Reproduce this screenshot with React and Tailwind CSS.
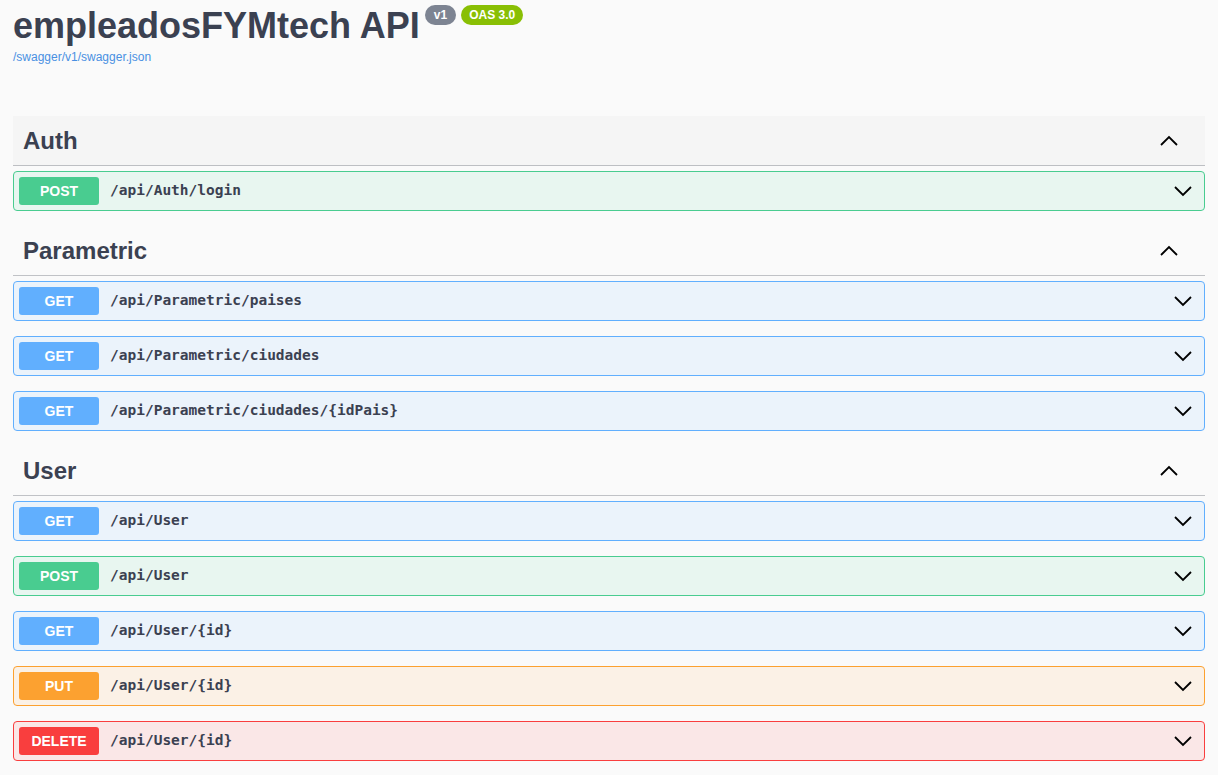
import React from 'react';

const methodStyles = {
  GET: { wrap: 'border-[#61affe] bg-[#ebf3fb]', badge: 'bg-[#61affe]' },
  POST: { wrap: 'border-[#49cc90] bg-[#e8f6f0]', badge: 'bg-[#49cc90]' },
  PUT: { wrap: 'border-[#fca130] bg-[#fbf1e6]', badge: 'bg-[#fca130]' },
  DELETE: { wrap: 'border-[#f93e3e] bg-[#fae7e7]', badge: 'bg-[#f93e3e]' },
};

const tags = [
  { name: 'Auth', hover: true, ops: [{ method: 'POST', path: '/api/Auth/login' }] },
  {
    name: 'Parametric',
    ops: [
      { method: 'GET', path: '/api/Parametric/paises' },
      { method: 'GET', path: '/api/Parametric/ciudades' },
      { method: 'GET', path: '/api/Parametric/ciudades/{idPais}' },
    ],
  },
  {
    name: 'User',
    ops: [
      { method: 'GET', path: '/api/User' },
      { method: 'POST', path: '/api/User' },
      { method: 'GET', path: '/api/User/{id}' },
      { method: 'PUT', path: '/api/User/{id}' },
      { method: 'DELETE', path: '/api/User/{id}' },
    ],
  },
];

const Chevron = ({ up }) => (
  <svg width="20" height="20" viewBox="0 0 20 20" className="shrink-0">
    <path
      d={up ? 'M2 14 L10 6 L18 14' : 'M2 6 L10 14 L18 6'}
      fill="none"
      stroke="#000"
      strokeWidth="1.8"
    />
  </svg>
);

const Operation = ({ method, path }) => {
  const s = methodStyles[method];
  return (
    <div className={`mb-[15px] flex h-[40px] items-center rounded-[4px] border pl-[5px] pr-[11px] ${s.wrap}`}>
      <span
        className={`flex h-[28px] w-[80px] items-center justify-center rounded-[3px] text-[14px] font-bold text-white ${s.badge}`}
      >
        {method}
      </span>
      <span className="ml-[11px] flex-1 font-['DejaVu_Sans_Mono',monospace] text-[14.5px] font-bold text-[#3b4151]">
        {path}
      </span>
      <Chevron />
    </div>
  );
};

const TagSection = ({ name, ops, hover }) => (
  <div>
    <div
      className={`flex h-[50px] items-center border-b border-[#3b4151]/30 pl-[10px] pr-[26px] ${hover ? 'bg-[#f5f5f5]' : ''}`}
    >
      <h3 className="flex-1 text-[24px] font-bold text-[#3b4151]">{name}</h3>
      <Chevron up />
    </div>
    <div className="pt-[5px]">
      {ops.map((op, i) => (
        <Operation key={i} {...op} />
      ))}
    </div>
  </div>
);

export default function App() {
  return (
    <div className="min-h-screen bg-[#fafafa] font-['Liberation_Sans',Arial,sans-serif] text-[#3b4151]">
      <div className="px-[13px]">
        <div className="flex items-start pt-[4px]">
          <h2 className="text-[36px] font-bold leading-[43px] text-[#3b4151]">empleadosFYMtech API</h2>
          <div className="ml-[5px] mt-[1px] flex gap-[5px]">
            <span className="flex h-[20px] items-center rounded-full bg-[#7d8492] px-[9px] text-[12px] font-bold text-white">
              v1
            </span>
            <span className="flex h-[20px] items-center rounded-full bg-[#89bf04] px-[8px] text-[12px] font-bold text-white">
              OAS 3.0
            </span>
          </div>
        </div>
        <a className="mt-[3px] block text-[12px] leading-[14px] text-[#4990e2]" href="#">
          /swagger/v1/swagger.json
        </a>
        <div className="mt-[52px]">
          {tags.map((t) => (
            <TagSection key={t.name} {...t} />
          ))}
        </div>
      </div>
    </div>
  );
}
